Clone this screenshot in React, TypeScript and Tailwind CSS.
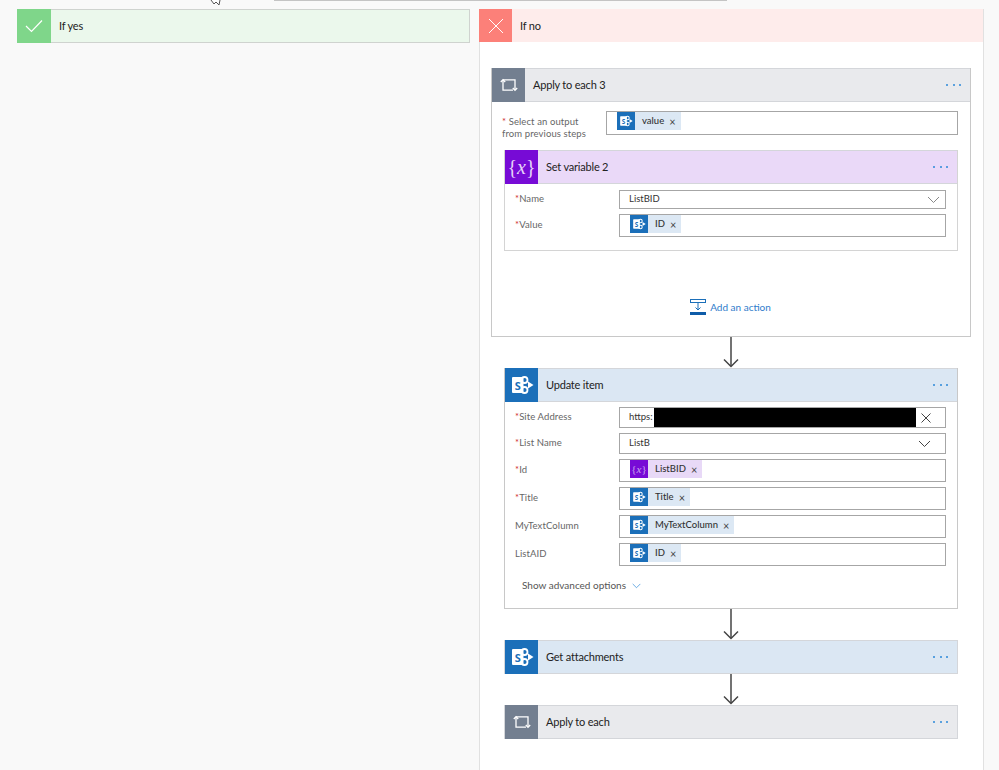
import type { ReactNode } from "react";

function RepeatIcon() {
  return (
    <svg width="18" height="14" viewBox="0 0 18 14" fill="none" stroke="#fff" strokeWidth="1.3">
      <path d="M3 2V12.2H13" />
      <path d="M0.8 4L3 1.6L5.2 4" />
      <path d="M3 1.8H15V12" />
      <path d="M12.8 10L15 12.4L17.2 10" />
    </svg>
  );
}

function SharePointIcon({ size = 24 }: { size?: number }) {
  return (
    <svg width={size} height={size} viewBox="0 0 24 24">
      <circle cx="14.5" cy="7" r="3" fill="none" stroke="#fff" strokeWidth="1.8" />
      <circle cx="14.5" cy="17" r="3" fill="none" stroke="#fff" strokeWidth="1.8" />
      <path d="M18 8.5L23.5 12L18 15.5Z" fill="#fff" />
      <rect x="2" y="4" width="11.5" height="16" rx="1" fill="#fff" />
      <text x="7.7" y="16.5" fontSize="11" fontWeight="700" textAnchor="middle" fill="#1b6fb9" fontFamily="Open Sans, sans-serif">
        S
      </text>
    </svg>
  );
}

function VariableIcon({ small = false }: { small?: boolean }) {
  return (
    <span className={`font-['Liberation_Serif',serif] ${small ? "text-[11px] text-[#c9a6ee]" : "text-[20px] text-[#e6d4f8]"} leading-none`}>
      {"{"}
      <i>x</i>
      {"}"}
    </span>
  );
}

function Dots() {
  return (
    <span className="flex gap-[4.5px]">
      <span className="h-[2px] w-[2px] rounded-full bg-[#2b88d8]" />
      <span className="h-[2px] w-[2px] rounded-full bg-[#2b88d8]" />
      <span className="h-[2px] w-[2px] rounded-full bg-[#2b88d8]" />
    </span>
  );
}

function CardHeader({
  title,
  icon,
  iconBg,
  bg,
}: {
  title: string;
  icon: ReactNode;
  iconBg: string;
  bg: string;
}) {
  return (
    <div className={`flex h-[34px] items-stretch ${bg} border-y border-[#d4d6da]`}>
      <div className={`-my-px flex w-[33px] items-center justify-center ${iconBg}`}>{icon}</div>
      <span className="ml-[8px] flex-1 self-center text-[11px] tracking-[-0.2px] text-[#222]">{title}</span>
      <span className="mr-[9px] self-center">
        <Dots />
      </span>
    </div>
  );
}

function Token({ label, purple = false }: { label: string; purple?: boolean }) {
  return (
    <span className={`flex h-[18px] items-center ${purple ? "bg-[#e8d9f7]" : "bg-[#dce8f4]"}`}>
      <span className={`flex h-[18px] w-[18px] items-center justify-center ${purple ? "bg-[#770bd6]" : "bg-[#1b6fb9]"}`}>
        {purple ? <VariableIcon small /> : <SharePointIcon size={14} />}
      </span>
      <span className="ml-[7px] pt-[1px] text-[9.5px] font-medium text-[#333]">{label}</span>
      <span className="ml-[5px] mr-[5px] text-[11px] leading-none text-[#444]">×</span>
    </span>
  );
}

function Field({
  label,
  required = true,
  height,
  children,
}: {
  label: string;
  required?: boolean;
  height: string;
  children: ReactNode;
}) {
  return (
    <div className="flex items-center">
      <span className="w-[114px] pb-[1px] pl-[10px] text-[9.5px] tracking-[0.1px] text-[#666]">
        {required && <span className="text-[#d13438]">*</span>}
        {label}
      </span>
      <div className={`flex ${height} w-[327px] items-center border border-[#a6a6a6] bg-white`}>{children}</div>
    </div>
  );
}

function TokenField({ label, token, required, purple }: { label: string; token: string; required?: boolean; purple?: boolean }) {
  return (
    <Field label={label} required={required} height="h-[23px]">
      <span className="ml-[10px] self-start">
        <Token label={token} purple={purple} />
      </span>
    </Field>
  );
}

function TextField({
  label,
  value,
  height,
  iconMargin,
  icon,
}: {
  label: string;
  value: string;
  height: string;
  iconMargin: string;
  icon: ReactNode;
}) {
  return (
    <Field label={label} height={height}>
      <span className="ml-[9px] flex-1 text-[9.5px] text-[#333]">{value}</span>
      <span className={`${iconMargin} flex`}>{icon}</span>
    </Field>
  );
}

function Chevron({ color = "#444", w = 13 }: { color?: string; w?: number }) {
  return (
    <svg width={w} height="8" viewBox="0 0 13 8" fill="none" stroke={color} strokeWidth="1">
      <path d="M1 1L6.5 6.5L12 1" />
    </svg>
  );
}

function Arrow() {
  return (
    <div className="flex h-[31px] justify-center pr-[1px]">
      <svg width="16" height="31" viewBox="0 0 16 31" fill="none" stroke="#444" strokeWidth="1.5">
        <path d="M8 0V29" />
        <path d="M1 22.5L8 29.5L15 22.5" />
      </svg>
    </div>
  );
}

export default function App() {
  return (
    <div className="relative h-[770px] w-[999px] overflow-hidden bg-[#f9f9f9] font-['Lato',sans-serif]">
      <div className="ml-[274px] h-px w-[453px] bg-[#c4c4c4]" />
      <svg className="absolute left-[210px] top-0" width="12" height="5" viewBox="0 0 12 5" fill="#fff" stroke="#555" strokeWidth="1">
        <path d="M1 0L4 4L6 2L9 5L10 0" />
      </svg>

      <div className="mt-[8px] flex items-start pl-[17px]">
        <div className="flex h-[34px] w-[453px] border border-[#cfd3cf] bg-[#ebf8ec]">
          <div className="-my-px -ml-px flex w-[34px] items-center justify-center bg-[#7fd68a]">
            <svg width="18" height="14" viewBox="0 0 18 14" fill="none" stroke="#fff" strokeWidth="1.2">
              <path d="M1 7L6.5 12.5L17 1.5" />
            </svg>
          </div>
          <span className="ml-[8px] self-center text-[11px] tracking-[-0.2px] text-[#222]">If yes</span>
        </div>

        <div className="ml-[9px] h-[770px] w-[505px] border-x border-[#e1e1e1] bg-white">
          <div className="-ml-px flex h-[33px] bg-[#feeceb]">
            <div className="flex w-[33px] items-center justify-center bg-[#fc8079]">
              <svg width="16" height="16" viewBox="0 0 16 16" fill="none" stroke="#fff" strokeWidth="1">
                <path d="M1 1L15 15M15 1L1 15" />
              </svg>
            </div>
            <span className="ml-[8px] self-center pt-[1px] text-[11px] tracking-[-0.2px] text-[#222]">If no</span>
          </div>

          <div className="px-[11px] pt-[26px]">
            <div className="h-[269px] w-[480px] border border-t-0 border-[#c8c8c8] bg-white">
              <CardHeader title="Apply to each 3" icon={<RepeatIcon />} iconBg="bg-[#737f90]" bg="bg-[#e9eaed]" />
              <div className="mt-[9px] flex h-[24px] items-start">
                <span className="w-[114px] pl-[10px] pt-[5px] text-[9.5px] leading-[12px] tracking-[0.1px] text-[#666]">
                  <span className="text-[#d13438]">*</span> Select an output
                  <br />
                  from previous steps
                </span>
                <div className="flex h-[24px] w-[352px] items-start border border-[#a6a6a6] bg-white pl-[10px]">
                  <Token label="value" />
                </div>
              </div>

              <div className="ml-[12px] mt-[15px] w-[454px] border border-t-0 border-[#d4d4d4]">
                <CardHeader title="Set variable 2" icon={<VariableIcon />} iconBg="bg-[#770bd6]" bg="bg-[#ead9f8]" />
                <div className="flex flex-col gap-[5px] pb-[13px] pt-[6px]">
                  <TextField label="Name" value="ListBID" height="h-[19px]" iconMargin="mr-[5px]" icon={<Chevron color="#888" />} />
                  <TokenField label="Value" token="ID" />
                </div>
              </div>

              <div className="mt-[48px] flex items-center justify-center gap-[4px] pr-[1px]">
                <svg width="16" height="16" viewBox="0 0 16 16" fill="none" stroke="#1b6fb9" strokeWidth="1">
                  <rect x="0.5" y="0.5" width="15" height="3" />
                  <path d="M8 4V11M5.5 8.5L8 11L10.5 8.5" />
                  <rect x="0" y="13" width="16" height="3" fill="#0f5ca8" stroke="none" />
                </svg>
                <span className="text-[10px] text-[#2f7ccb]">Add an action</span>
              </div>
            </div>

            <Arrow />

            <div className="ml-[13px] h-[241px] w-[454px] border border-t-0 border-[#c8c8c8]">
              <CardHeader title="Update item" icon={<SharePointIcon />} iconBg="bg-[#1b6fb9]" bg="bg-[#dbe7f3]" />
              <div className="flex flex-col gap-[5px] pt-[5px]">
                <Field label="Site Address" height="h-[21px]">
                  <span className="ml-[9px] w-[25px] text-[9.5px] text-[#333]">https:</span>
                  <span className="h-full w-[262px] bg-black" />
                  <svg className="ml-[5px]" width="10" height="10" viewBox="0 0 10 10" fill="none" stroke="#444" strokeWidth="1">
                    <path d="M0.5 0.5L9.5 9.5M9.5 0.5L0.5 9.5" />
                  </svg>
                </Field>
                <TextField label="List Name" value="ListB" height="h-[21px]" iconMargin="mr-[14px]" icon={<Chevron />} />
                <TokenField label="Id" token="ListBID" purple />
                <TokenField label="Title" token="Title" />
                <TokenField label="MyTextColumn" token="MyTextColumn" required={false} />
                <TokenField label="ListAID" token="ID" required={false} />
              </div>
              <div className="ml-[17px] mt-[12px] flex items-center gap-[6px]">
                <span className="text-[10px] text-[#555]">Show advanced options</span>
                <Chevron color="#2b88d8" w={9} />
              </div>
            </div>

            <Arrow />

            <div className="ml-[13px] w-[454px] border-x border-[#d4d6da]">
              <CardHeader title="Get attachments" icon={<SharePointIcon />} iconBg="bg-[#1b6fb9]" bg="bg-[#dbe7f3]" />
            </div>

            <Arrow />

            <div className="ml-[13px] w-[454px] border-x border-[#d4d6da]">
              <CardHeader title="Apply to each" icon={<RepeatIcon />} iconBg="bg-[#737f90]" bg="bg-[#e9eaed]" />
            </div>
          </div>
        </div>
      </div>
    </div>
  );
}
